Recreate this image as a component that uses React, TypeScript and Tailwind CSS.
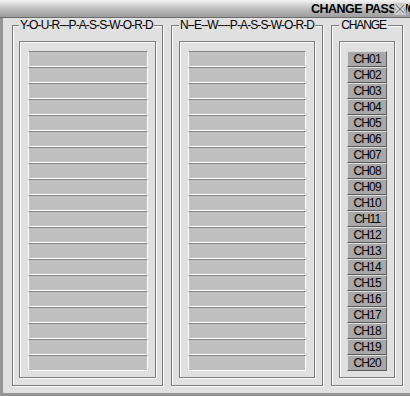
import React from "react";

const rows = Array.from({ length: 20 }, (_, i) => i + 1);

function TextBox({ w }: { w: string }) {
  return (
    <div
      className={`${w} h-[16px] shrink-0 bg-[#c0c0c0] border-t border-t-[#858585] border-b border-b-white border-l border-l-white border-r border-r-white`}
    />
  );
}

export default function App() {
  return (
    <div className="w-[410px] h-[396px] overflow-hidden bg-[#e0e0e0] flex flex-col font-['Liberation_Sans',Arial,sans-serif] text-black">
      <div className="relative h-[18px] shrink-0 bg-gradient-to-b from-[#f4f4f4] via-[#c0c0c0] to-[#9c9c9c] border-b border-b-[#6c6c6c] pl-[311px] pt-px text-[12.5px] font-bold leading-[16px] tracking-[-0.5px] whitespace-nowrap overflow-hidden">
        CHANGE PASSWORD
        <svg
          className="absolute left-[394px] top-[3px]"
          width="12"
          height="12"
          viewBox="0 0 12 12"
        >
          <rect x="0" y="0" width="12" height="12" fill="#c8c8c8" opacity="0.85" />
          <path d="M2 2 L10 10 M10 2 L2 10" stroke="#ffffff" strokeWidth="3" />
          <path d="M2 2 L10 10 M10 2 L2 10" stroke="#808080" strokeWidth="1.5" />
        </svg>
      </div>
      <div className="flex-1 flex border-l-[3px] border-b-[3px] border-[#949494] pl-[9px] pt-px gap-[8px]">
        <fieldset className="w-[151px] h-[367px] border border-[#7a7a7a] shadow-[inset_1px_1px_0_#fff,1px_1px_0_#fff] px-[6px]">
          <legend className="px-px bg-[#e0e0e0] text-[12px] leading-[13px] tracking-[-0.9px] whitespace-nowrap">
            Y-O-U-R---P-A-S-S-W-O-R-D
          </legend>
          <div className="mt-[9px] border border-[#7a7a7a] shadow-[inset_1px_1px_0_#fff,1px_1px_0_#fff] pt-[9px] pb-[6px] pl-[8px] flex flex-col">
            {rows.map((r) => (
              <TextBox key={r} w="w-[120px]" />
            ))}
          </div>
        </fieldset>
        <fieldset className="w-[152px] h-[367px] border border-[#7a7a7a] shadow-[inset_1px_1px_0_#fff,1px_1px_0_#fff] px-[7px]">
          <legend className="px-px bg-[#e0e0e0] text-[12px] leading-[13px] tracking-[-0.9px] whitespace-nowrap">
            N--E--W----P-A-S-S-W-O-R-D
          </legend>
          <div className="mt-[9px] border border-[#7a7a7a] shadow-[inset_1px_1px_0_#fff,1px_1px_0_#fff] pt-[9px] pb-[6px] pl-[8px] flex flex-col">
            {rows.map((r) => (
              <TextBox key={r} w="w-[118px]" />
            ))}
          </div>
        </fieldset>
        <fieldset className="w-[72px] h-[367px] border border-[#7a7a7a] shadow-[inset_1px_1px_0_#fff,1px_1px_0_#fff] px-[7px]">
          <legend className="px-[2px] bg-[#e0e0e0] text-[12px] leading-[13px] tracking-[-1.1px] whitespace-nowrap">
            CHANGE
          </legend>
          <div className="mt-[9px] border border-[#7a7a7a] shadow-[inset_1px_1px_0_#fff,1px_1px_0_#fff] pt-[9px] pb-[6px] flex flex-col items-center">
            {rows.map((r) => (
              <div
                key={r}
                className="w-[40px] h-[16px] shrink-0 bg-[#a8a8a8] border border-t-[#dcdcdc] border-l-[#dcdcdc] border-b-[#5c5c5c] border-r-[#5c5c5c] text-[12px] leading-[14px] tracking-[-0.9px] text-center whitespace-nowrap"
              >
                {`CH${String(r).padStart(2, "0")}`}
              </div>
            ))}
          </div>
        </fieldset>
      </div>
    </div>
  );
}
